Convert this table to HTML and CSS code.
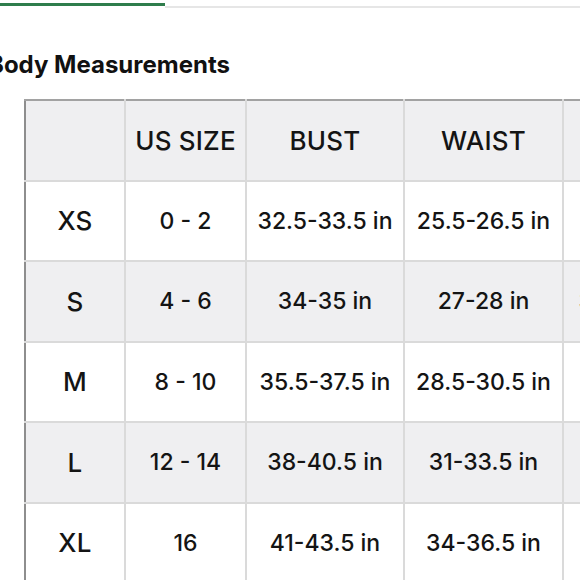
FILE: index.html
```html
<!DOCTYPE html>
<html>
<head>
<meta charset="utf-8">
<link rel="stylesheet" href="styles.css">
</head>
<body>
<div class="page">
  <div class="tabs">
    <div class="tab-active"></div>
    <div class="tab-rest"></div>
  </div>
  <h2 class="title">Body Measurements</h2>
  <table class="chart">
    <colgroup>
      <col class="c1"><col class="c2"><col class="c3"><col class="c4"><col class="c5">
    </colgroup>
    <thead>
      <tr class="shade">
        <th></th><th>US SIZE</th><th>BUST</th><th>WAIST</th><th>HIPS</th>
      </tr>
    </thead>
    <tbody>
      <tr><th>XS</th><td>0 - 2</td><td>32.5-33.5 in</td><td>25.5-26.5 in</td><td>35-36 in</td></tr>
      <tr class="shade"><th>S</th><td>4 - 6</td><td>34-35 in</td><td>27-28 in</td><td>36.5-37.5 in</td></tr>
      <tr><th>M</th><td>8 - 10</td><td>35.5-37.5 in</td><td>28.5-30.5 in</td><td>39-40 in</td></tr>
      <tr class="shade"><th>L</th><td>12 - 14</td><td>38-40.5 in</td><td>31-33.5 in</td><td>41-42 in</td></tr>
      <tr><th>XL</th><td>16</td><td>41-43.5 in</td><td>34-36.5 in</td><td>44-45 in</td></tr>
    </tbody>
  </table>
</div>
</body>
</html>
```

FILE: styles.css
```css
html, body {
  margin: 0;
  padding: 0;
  background: #ffffff;
  overflow: hidden;
}
.page {
  width: 580px;
  height: 580px;
  overflow: hidden;
  font-family: Inter, "Liberation Sans", sans-serif;
  color: #141414;
}
.tabs {
  display: flex;
  align-items: flex-start;
  padding-top: 3px;
}
.tab-active {
  width: 165px;
  height: 3px;
  background: #2f7d4c;
}
.tab-rest {
  flex: 1;
  height: 2px;
  margin-top: 3px;
  background: #e6e6e6;
}
.title {
  margin: 42px 0 0 -12px;
  font-size: 24px;
  font-weight: 700;
  line-height: 30px;
  color: #111;
  white-space: nowrap;
}
.chart {
  margin: 19px 0 0 24px;
  border-collapse: collapse;
  table-layout: fixed;
  width: 700px;
}
.c1 { width: 100px; }
.c2 { width: 121px; }
.c3 { width: 158px; }
.c4 { width: 159px; }
.c5 { width: 162px; }
.chart th, .chart td {
  height: 78.5px;
  padding: 0;
  border: 2px solid #dadada;
  text-align: center;
  vertical-align: middle;
  font-weight: 500;
  font-size: 23px;
  color: #141414;
  white-space: nowrap;
  overflow: hidden;
}
.chart th {
  font-size: 26px;
  letter-spacing: 0.2px;
}
.chart tr > :first-child {
  border-left: 2px solid #8e8e8e;
}
.chart thead th {
  border-top: 2px solid #a2a2a2;
}
.shade th, .shade td {
  background: #efeff1;
}
```
